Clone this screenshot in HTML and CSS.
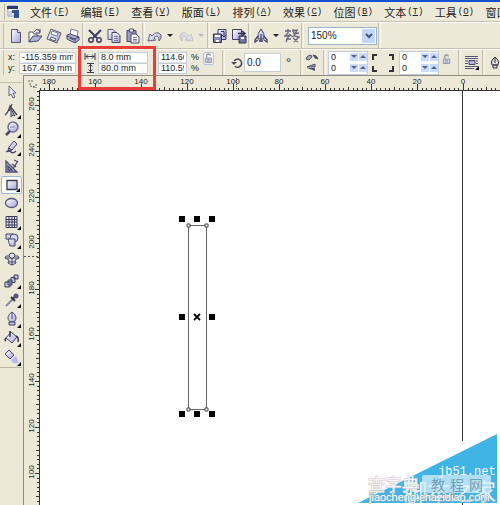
FILE: index.html
```html
<!DOCTYPE html>
<html lang="zh-CN">
<head>
<meta charset="utf-8">
<title>CorelDRAW</title>
<link rel="stylesheet" href="styles.css">
</head>
<body>
<svg class="defs" aria-hidden="true">
  <defs>
    <linearGradient id="lav" x1="0" y1="0" x2="1" y2="1"><stop offset="0" stop-color="#fff"/><stop offset="1" stop-color="#a3a3d8"/></linearGradient>
    <symbol id="lock" viewBox="0 0 10 12"><path d="M3 5V3q0-2 2-2t2 2" fill="none" stroke="#8f93ad" stroke-width="1.4"/><path d="M1.5 5.5h7v5h-7z" fill="#d5d8e8" stroke="#8f93ad"/><path d="M3 7h4M3 9h4" stroke="#8f93ad"/></symbol>
    <symbol id="pages" viewBox="0 0 16 16"><path d="M2 1.500h5l3 3v7H2z" fill="url(#lav)" stroke="#555574"/><path d="M6 4.500h5l3 3v7H6z" fill="url(#lav)" stroke="#45456a"/><path d="M8 8.500h4M8 10.500h4M8 12.500h4" stroke="#777799"/></symbol>
    <symbol id="arc" viewBox="0 0 16 16"><path d="M1 13 3 6l2 2q5-6 9-1 1 3-2 6 0-5-2-5-2 0-3 2l2 2z" fill="url(#lav)" stroke="currentColor"/></symbol>
  </defs>
</svg>
<div class="app">
  <div class="titlebar"></div>
  <nav class="menubar">
    <svg class="appicon" viewBox="0 0 14 14"><path d="M1 1h9v10H1z" fill="#fff" stroke="#8d9cc8"/><path d="M0 1h11v3H0z" fill="#243b78"/><path d="M5 5h7v8H7V8H5z" fill="#33518e"/><path d="M2 6h3v5H2z" fill="#c2cef0"/></svg>
    <div class="menus">
      <button>文件<span>(<u>F</u>)</span></button>
      <button>编辑<span>(<u>E</u>)</span></button>
      <button>查看<span>(<u>V</u>)</span></button>
      <button>版面<span>(<u>L</u>)</span></button>
      <button>排列<span>(<u>A</u>)</span></button>
      <button>效果<span>(<u>C</u>)</span></button>
      <button>位图<span>(<u>B</u>)</span></button>
      <button>文本<span>(<u>T</u>)</span></button>
      <button>工具<span>(<u>O</u>)</span></button>
      <button>窗口</button>
    </div>
  </nav>

  <div class="toolbar">
    <button class="tb" aria-label="新建"><svg viewBox="0 0 16 16"><path d="M3.500 1.500h6l3 3v10h-9z" fill="url(#lav)" stroke="#55556f"/><path d="M9.500 1.500v3h3" fill="#fff" stroke="#55556f"/></svg></button>
    <button class="tb" aria-label="打开"><svg viewBox="0 0 16 16"><path d="M2 14V4h4l1 2h3v3" fill="#fff" stroke="#55556f"/><path d="m2 14 4-6h9l-4 5z" fill="#b4b4dc" stroke="#45456a"/><path d="M7 4q2-4 5-2l1 2M13 1v4H9" fill="none" stroke="#45456a"/></svg></button>
    <button class="tb" aria-label="保存"><svg viewBox="0 0 16 16"><path d="m5 1 10 4-4 10-10-4z" fill="url(#lav)" stroke="#55556f"/><path d="m6 3 6 2-1 3-6-2z" fill="#fff" stroke="#777799"/><path d="m5 9 5 2-1 2-5-2z" fill="#fff" stroke="#55556f"/></svg></button>
    <button class="tb" aria-label="打印"><svg viewBox="0 0 16 16"><path d="m5 7 1-6 7 2-1 6" fill="#fff" stroke="#777799"/><path d="m2 7 3-1 9 3v3l-4 3-8-4z" fill="#b1b1dc" stroke="#45456a"/><path d="m2 8 8 3 4-2M10 11v3M5 10l4 2" fill="none" stroke="#45456a"/></svg></button>
    <i class="sep"></i>
    <button class="tb" aria-label="剪切"><svg viewBox="0 0 16 16"><path d="m2 2 8 8M14 2l-8 8" stroke="#3c3c5c" stroke-width="2"/><circle cx="4" cy="12" r="2.200" fill="none" stroke="#3c3c5c" stroke-width="1.500"/><circle cx="12" cy="12" r="2.200" fill="none" stroke="#3c3c5c" stroke-width="1.500"/></svg></button>
    <button class="tb" aria-label="复制"><svg><use href="#pages"/></svg></button>
    <button class="tb" aria-label="粘贴"><svg viewBox="0 0 16 16"><path d="M2 2.500h9v11H2z" fill="#9d9dcc" stroke="#45456a"/><path d="M4.500 1h4v3h-4z" fill="#fff" stroke="#45456a"/><path d="M6 6h5l3 3v6H6z" fill="#fff" stroke="#45456a"/><path d="M8 9.500h4M8 11.500h4M8 13h4" stroke="#777799"/></svg></button>
    <i class="sep"></i>
    <button class="tb undo" aria-label="撤消"><svg><use href="#arc"/></svg></button>
    <button class="caret" aria-label="撤消列表"></button>
    <button class="tb redo" aria-label="重做"><svg><use href="#arc"/></svg></button>
    <button class="caret dim" aria-label="重做列表"></button>
    <i class="sep"></i>
    <button class="tb" aria-label="导入"><svg viewBox="0 0 16 16"><path d="M6 1.500h8v10H6z" fill="url(#lav)" stroke="#3f3f66"/><path d="M1.500 6h8v8.500h-8z" fill="#8888bd" stroke="#303052"/><path d="M3 7h5v2H3zM4 12h3v2H4z" fill="#fff"/><path d="M9 3.500h3v5M10 7l2 2 2-2" fill="none" stroke="#303052"/></svg></button>
    <button class="tb" aria-label="导出"><svg viewBox="0 0 16 16"><path d="M1.500 1.500h9v10h-9z" fill="url(#lav)" stroke="#3f3f66"/><path d="M8 8h7v7H8z" fill="#7474a8" stroke="#303052"/><path d="M10 9h3v2h-3z" fill="#fff"/><path d="M7 5.500h6M11 3l3 2.500L11 8" fill="none" stroke="#303052" stroke-width="1.500"/></svg></button>
    <i class="sep"></i>
    <button class="tb" aria-label="应用程序启动器"><svg viewBox="0 0 16 16"><path d="M8 1q4 4 3 10H5Q4 5 8 1z" fill="url(#lav)" stroke="#45456a"/><path d="m5 8-3 4v2l3-2M11 8l3 4v2l-3-2M8 6v8M6 13h4" fill="none" stroke="#45456a" stroke-width="1.300"/></svg></button>
    <button class="caret" aria-label="启动器列表"></button>
    <button class="tb" aria-label="社区"><svg viewBox="0 0 16 16"><path d="M1 3h6M4 1v4l-3 3h5M5 7l-3 7M2 11h5M8 3l6-1M9 1l1 5 5-1M13 2l-3 6 5 1-5 5M9 10l5 4M5 6l4 3" fill="none" stroke="#66667f" stroke-width="1.300"/></svg></button>
    <i class="sep"></i>
    <label class="zoom"><input type="text" value="150%" aria-label="缩放级别"><button aria-label="缩放列表"><svg viewBox="0 0 10 8"><path d="m2 2 3 3 3-3" fill="none" stroke="#3c5684" stroke-width="2"/></svg></button></label>
    <i class="sep"></i>
  </div>

  <div class="props">
    <div class="pair pos">
      <label for="px">x:</label><input id="px" type="text" value="-115.359 mm">
      <label for="py">y:</label><input id="py" type="text" value="167.439 mm">
    </div>
    <div class="pair size">
      <label for="pw" aria-label="宽度"><svg viewBox="0 0 12 10"><path d="M1 1v7M11 1v7M2 4.500h8M4 2.500l-2 2 2 2M8 2.500l2 2-2 2" fill="none" stroke="#3c3c50"/></svg></label><input id="pw" type="text" value="8.0 mm">
      <label for="ph" aria-label="高度"><svg viewBox="0 0 12 10"><path d="M3 .500h7M3 9.500h7M6.500 1v8M4.500 3.500l2-2 2 2M4.500 6.500l2 2 2-2" fill="none" stroke="#3c3c50"/></svg></label><input id="ph" type="text" value="80.0 mm">
    </div>
    <div class="pair scale">
      <input id="sx" type="text" value="114.66"><label for="sx">%</label>
      <input id="sy" type="text" value="110.59"><label for="sy">%</label>
    </div>
    <button class="lock boxed" aria-label="锁定比率"><svg><use href="#lock"/></svg></button>
    <i class="sep"></i>
    <label class="rotate"><svg viewBox="0 0 12 12"><path d="M3 4q4-4 7 0 2 4-2 6-3 1-4-1" fill="none" stroke="#4a4a5c" stroke-width="1.500"/><path d="M0 5h6L3 8z" fill="#4a4a5c"/></svg><input type="text" value="0.0" aria-label="旋转角度"><span>°</span></label>
    <i class="sep"></i>
    <div class="mirror">
      <button aria-label="水平镜像"><svg viewBox="0 0 14 9"><path d="M1 6q1-4 5-4l1 2-3 3z" fill="#aaaabd" stroke="#55556a"/><path d="M8 2q4 0 5 4l-3-1z" fill="#55556a" stroke="#55556a"/></svg></button>
      <button aria-label="垂直镜像"><svg viewBox="0 0 14 9"><path d="m2 4 8-3v3z" fill="#8f8fa8" stroke="#55556a"/><path d="m2 5 8 3V5z" fill="#55556a"/></svg></button>
    </div>
    <i class="sep"></i>
    <div class="corners">
      <div class="spin"><input type="text" value="0" aria-label="左上角"><button class="dn" aria-label="减"></button><button class="up" aria-label="加"></button></div>
      <div class="spin"><input type="text" value="0" aria-label="左下角"><button class="dn" aria-label="减"></button><button class="up" aria-label="加"></button></div>
    </div>
    <svg class="brackets" viewBox="0 0 24 18"><path d="M2 6V1h4M18 1h4v5M2 12v5h4M18 17h4v-5" fill="none" stroke="#333" stroke-width="2"/></svg>
    <div class="corners">
      <div class="spin"><input type="text" value="0" aria-label="右上角"><button class="dn" aria-label="减"></button><button class="up" aria-label="加"></button></div>
      <div class="spin"><input type="text" value="0" aria-label="右下角"><button class="dn" aria-label="减"></button><button class="up" aria-label="加"></button></div>
    </div>
    <button class="lock" aria-label="全部圆角"><svg><use href="#lock"/></svg></button>
    <i class="sep"></i>
    <button class="wrap" aria-label="文本换行"><svg viewBox="0 0 16 16"><path d="M1 1.500h13M1 3.500h13M1 11.500h13M1 13.500h9M1 6h3M1 8.500h3M12 6h2M12 8.500h2" stroke="#55556f"/><path d="M5 5.500h6v4H5z" fill="#b4b4e0" stroke="#45456a"/><path d="M15 11v4h-4z"/></svg></button>
    <i class="sep"></i>
    <button class="pen" aria-label="轮廓宽度"><svg viewBox="0 0 12 14"><path d="M6 1q5 4 3 8H3Q1 5 6 1zM4 9h4v3H4z" fill="#ddd" stroke="#333344"/><path d="M6 2v5" stroke="#333344"/></svg></button>
  </div>

  <div class="work">
    <aside class="toolbox">
      <div class="tools first">
        <button aria-label="挑选"><svg viewBox="0 0 16 16"><path d="M5 2v10l2-2 2 4 2-1-2-4h3z" fill="#e3e3f5" stroke="#66667c"/></svg></button>
        <button class="fly" aria-label="形状"><svg viewBox="0 0 16 16"><path d="M1 12q3-2 5-9l7 9M8 1 5 8" fill="none" stroke="#45455c" stroke-width="1.300"/><path d="M7 6v8l2-2 2 1z" fill="#a9a9d4" stroke="#45455c"/></svg></button>
        <button class="fly" aria-label="缩放"><svg viewBox="0 0 16 16"><path d="m6 10-4 4" stroke="#45456a" stroke-width="2.500"/><circle cx="9" cy="6" r="5" fill="url(#lav)" stroke="#6d6d94" stroke-width="1.500"/><path d="M6 6h5" stroke="#8484b4"/></svg></button>
        <button class="fly" aria-label="手绘"><svg viewBox="0 0 16 16"><path d="M10 1 5 7l-1 4 4-1 5-6z" fill="url(#lav)" stroke="#45456a"/><path d="m4 11-2 1q3-2 5 0t5-1M4 8l4 2" fill="none" stroke="#45456a" stroke-width="1.300"/></svg></button>
        <button aria-label="智能绘图"><svg viewBox="0 0 16 16"><path d="M2 3v11h11z" fill="#b1b1d6" stroke="#4c4c6c" stroke-width="1.300"/><path d="M4 8v4h4zM14 3l-4 6-2 1M10 2l4 2M8 6l4 3" fill="none" stroke="#4c4c6c" stroke-width="1.300"/></svg></button>
        <button class="fly active" aria-label="矩形"><svg viewBox="0 0 16 16"><path d="M3 3.500h10v9H3z" fill="url(#lav)" stroke="#3a3a55" stroke-width="1.300"/></svg></button>
        <button class="fly" aria-label="椭圆"><svg viewBox="0 0 16 16"><ellipse cx="7.500" cy="8" rx="6" ry="4.500" fill="url(#lav)" stroke="#55557c" stroke-width="1.300"/></svg></button>
        <button class="fly" aria-label="图纸"><svg viewBox="0 0 16 16"><path d="M2 2.500h11v11H2zM2 5.500h11M2 8h11M2 11h11M5 2v11M8 2v11M10.500 2v11" fill="#e1e1f4" stroke="#3c3c5c"/></svg></button>
        <button class="fly" aria-label="基本形状"><svg viewBox="0 0 16 16"><path d="M2 2h7v5H2z" fill="#d1d1ef" stroke="#45456a"/><circle cx="10" cy="6" r="4" fill="#d6d6f1" stroke="#45456a"/><path d="M4 7h7v7H6z" fill="url(#lav)" stroke="#45456a"/></svg></button>
        <button aria-label="智能填充"><svg viewBox="0 0 16 16"><path d="M8 2q3 0 3 3 4-1 4 2l-4 2 1 3-4 2-4-2 1-3-4-2q0-3 4-2 0-3 3-3zM5 5l3 3 3-3M8 8v6M2 7h12M5 11h6" fill="#ddddef" stroke="#48485f"/></svg></button>
      </div>
      <div class="tools second">
        <button class="fly" aria-label="交互式调和"><svg viewBox="0 0 16 16"><path d="M1 9h5v5H1zM4 7h4v5H4zM7 4.500h4v5H7zM10 2h4v4h-4z" fill="#c2c2e8" stroke="#3c3c5c"/></svg></button>
        <button class="fly" aria-label="滴管"><svg viewBox="0 0 16 16"><path d="m2 14 7-7" stroke="#8888a4" stroke-width="2"/><path d="m7 5 4 4M9 7l3-4" stroke="#33334c" stroke-width="2"/><circle cx="12" cy="4" r="2.500" fill="#55557c"/></svg></button>
        <button class="fly" aria-label="轮廓"><svg viewBox="0 0 16 16"><path d="M8 1q7 5 2 10H6Q1 6 8 1z" fill="url(#lav)" stroke="#45456a"/><path d="M8 2v6M5 11h6v3H5z" fill="#bcbce0" stroke="#45456a"/></svg></button>
        <button class="fly" aria-label="填充"><svg viewBox="0 0 16 16"><path d="m7 2 6 5-5 6-6-5z" fill="url(#lav)" stroke="#45456a"/><path d="M6 1v6M2 8q-2 2 0 3M12 6q3 1 2 6" fill="none" stroke="#33334c" stroke-width="1.500"/></svg></button>
        <button class="fly" aria-label="交互式填充"><svg viewBox="0 0 16 16"><path d="m5 1 5 5-4 4-5-5z" fill="url(#lav)" stroke="#45456a"/><path d="m7 11 5-4 3 7H9z" fill="#b8b8ee"/></svg></button>
      </div>
    </aside>

    <main class="view">
      <div class="origin"><svg viewBox="0 0 15 14"><path d="M4 5h3M5 8h3M8 4v3M9 11h3M12 8v4M6 10l5 1" fill="none" stroke="#66665f" stroke-dasharray="2 1"/></svg></div>
      <svg class="ruler-h">
        <defs><pattern id="th" x="10" y="0" width="46" height="14" patternUnits="userSpaceOnUse"><path d="M0 8h1v6H0zM5 12h1v2H5zM9 12h1v2H9zM14 12h1v2h-1zM18 12h1v2h-1zM23 11h1v3h-1zM28 12h1v2h-1zM32 12h1v2h-1zM37 12h1v2h-1zM41 12h1v2h-1z" fill="#333"/></pattern></defs>
        <rect width="100%" height="14" fill="url(#th)"/>
        <path d="M197.500 2v12" stroke="#555" stroke-dasharray="1 1"/>
        <g text-anchor="middle"><text x="10" y="8">180</text><text x="56" y="8">160</text><text x="102" y="8">140</text><text x="148" y="8">120</text><text x="194" y="8">100</text><text x="240" y="8">80</text><text x="286" y="8">60</text><text x="332" y="8">40</text><text x="378" y="8">20</text><text x="424" y="8">0</text></g>
      </svg>
      <svg class="ruler-v">
        <defs><pattern id="tv" x="0" y="15" width="15" height="46" patternUnits="userSpaceOnUse"><path d="M11 0h4v1h-4zM13 5h2v1h-2zM13 9h2v1h-2zM13 14h2v1h-2zM13 18h2v1h-2zM12 23h3v1h-3zM13 28h2v1h-2zM13 32h2v1h-2zM13 37h2v1h-2zM13 41h2v1h-2z" fill="#333"/></pattern></defs>
        <rect width="15" height="100%" fill="url(#tv)"/>
        <path d="M0 166.500h15" stroke="#555" stroke-dasharray="2 2"/>
        <g text-anchor="middle"><text transform="translate(10 14) rotate(-90)">260</text><text transform="translate(10 60) rotate(-90)">240</text><text transform="translate(10 106) rotate(-90)">220</text><text transform="translate(10 152) rotate(-90)">200</text><text transform="translate(10 198) rotate(-90)">180</text><text transform="translate(10 244) rotate(-90)">160</text><text transform="translate(10 290) rotate(-90)">140</text><text transform="translate(10 336) rotate(-90)">120</text><text transform="translate(10 382) rotate(-90)">100</text></g>
      </svg>
      <div class="canvas">
        <svg class="drawing">
          <path d="M422.500 0v350" stroke="#333"/>
          <path d="M148.500 134.500h18v184h-18z" fill="none" stroke="#666"/>
          <path d="M147 133h3v3h-3zM165 133h3v3h-3zM147 317h3v3h-3zM165 317h3v3h-3z" fill="#fff" stroke="#444"/>
          <path d="M139 125h6v6h-6zM154 125h6v6h-6zM169 125h6v6h-6zM139 223h6v6h-6zM169 223h6v6h-6zM139 320h6v6h-6zM154 320h6v6h-6zM169 320h6v6h-6z"/>
          <path d="m154 223 6 6m0-6-6 6" stroke="#000" stroke-width="1.800"/>
        </svg>
        <svg class="watermark" viewBox="0 0 150 75">
          <path d="M8 73 147 4v69z" fill="#41b4e6"/>
          <path d="M112.500 73v2" stroke="#333"/>
          <text class="site" x="88" y="45">jb51.net</text>
          <text class="big" x="54" y="70">脚本之家</text>
          <text class="dict" x="18" y="61">查字典</text>
          <rect x="72" y="45" width="69" height="18" rx="2" fill="#d5edf8" fill-opacity=".75"/>
          <g class="course"><text x="81" y="60">教</text><text x="100" y="60">程</text><text x="119" y="60">网</text></g>
          <text class="url" x="19" y="71">jiaocheng.chazidian.com</text>
        </svg>
      </div>
    </main>
  </div>
  <div class="highlight"></div>
</div>
</body>
</html>
```
FILE: styles.css
```css
* { box-sizing: border-box; }
body { margin: 0; background: #ece9d8; color: #222; font-family: "Liberation Sans", "Noto Sans CJK SC", sans-serif; font-size: 9px; }
button { display: flex; align-items: center; justify-content: center; margin: 0; padding: 0; border: 0; background: none; color: inherit; font: inherit; }
input { min-width: 0; margin: 0; padding: 0 2px; border: 1px solid #c5ced6; background: #fff; color: #222; font: inherit; }
svg { display: block; }
.defs { position: absolute; width: 0; height: 0; }
.app { position: relative; display: flex; flex-direction: column; height: 100vh; overflow: hidden; }
.titlebar { flex: none; height: 2px; background: #1450d2; }

.menubar { flex: none; display: flex; align-items: center; height: 20px; padding-left: 4px; border-bottom: 1px solid #c4c0ae; }
.menubar::before { content: ""; width: 1px; height: 16px; background: #bbb7a5; }
.appicon { flex: none; width: 14px; height: 14px; margin: 0 9px 0 2px; }
.menus { flex: 1; display: grid; grid-template-columns: repeat(10, 1fr); margin-right: -36px; font-size: 11px; font-family: "Noto Sans CJK SC", sans-serif; }
.menus button { justify-content: flex-start; white-space: nowrap; line-height: 16px; }
.menus span { padding-left: 1px; font: 9px "Liberation Mono", monospace; }

.toolbar, .props { flex: none; display: flex; align-items: center; padding-left: 6px; box-shadow: inset 3px 0 #ece9d8, inset 4px 0 #c4c0ae; overflow: hidden; }
.toolbar { height: 27px; border-top: 1px solid #fff; border-bottom: 1px solid #c4c0ae; }
.sep { flex: none; align-self: stretch; width: 3px; border-left: 1px solid #c4c0ae; border-right: 1px solid #f7f5ec; }
.tb { flex: none; width: 19px; height: 20px; }
.tb svg { width: 16px; height: 16px; }
.undo { color: #62627c; }
.redo { color: #aaaabc; }
.redo svg { transform: scaleX(-1); opacity: .6; }
.caret { flex: none; width: 12px; height: 20px; }
.caret::before { content: ""; border: 3px solid transparent; border-top-color: #222; border-bottom: 0; }
.caret.dim::before { border-top-color: #bbb; }
.zoom { flex: none; display: flex; width: 69px; height: 18px; margin: 0 1px 0 4px; border: 1px solid #9bb2cf; background: #fff; font-size: 10px; }
.zoom input { flex: 1; border: 0; }
.zoom button { width: 13px; margin: 1px; background: #c3d5f8; }
.zoom svg { width: 10px; height: 8px; }

.props { height: 26px; padding-left: 8px; border-top: 1px solid #fff; }
.pair { flex: none; display: grid; grid-template-rows: 11px 11px; align-items: stretch; line-height: 11px; }
.pair input { line-height: 9px; height: 11px; }
.pair input:first-of-type { border-bottom-color: #dfe3e6; }
.pair svg { width: 12px; height: 10px; }
.pos { grid-template-columns: 11px 57px; margin-right: 8px; }
.size { grid-template-columns: 14px 50px; margin-right: 10px; }
.scale { grid-template-columns: 29px 16px; }
.scale label { padding-left: 4px; }
.lock { flex: none; align-self: flex-start; width: 11px; height: 13px; margin-top: 2px; }
.lock svg { width: 9px; height: 11px; }
.boxed { margin-right: 8px; border: 1px solid #b4c4dc; border-radius: 2px; background: #f5f6f8; }
.rotate { flex: none; display: flex; align-items: center; gap: 1px; margin: 0 10px 0 6px; font-size: 10px; }
.rotate svg { width: 12px; height: 12px; }
.rotate input { width: 37px; height: 19px; }
.rotate span { width: 8px; padding-left: 4px; font-size: 13px; }
.mirror { flex: none; display: grid; gap: 1px; margin: 0 4px 0 2px; }
.mirror svg { width: 14px; height: 9px; }
.corners { flex: none; display: grid; grid-template: 11px 11px / minmax(0, 1fr); width: 40px; margin-left: 2px; border: 1px solid #c5ced6; background: #fff; }
.spin { display: flex; gap: 1px; }
.spin input { flex: 1; width: 0; height: 10px; border: 0; line-height: 10px; }
.spin button { flex: none; width: 8px; height: 8px; margin-top: 1px; background: #c9dafa; }
.spin button::before { content: ""; border: 3px solid transparent; }
.spin .dn::before { border-top-color: #4c6590; border-bottom: 0; }
.spin .up::before { border-bottom-color: #4c6590; border-top: 0; }
.brackets { flex: none; width: 24px; height: 18px; margin: 0 2px 0 3px; }
.corners + .lock { margin: 3px 6px 0 2px; }
.wrap { flex: none; margin: 0 2px 0 3px; }
.wrap svg { width: 16px; height: 16px; }
.pen { flex: none; margin-left: 4px; }
.pen svg { width: 12px; height: 14px; }

.work { flex: 1; display: grid; grid-template-columns: 23px 1fr; min-height: 0; }
.toolbox { padding-top: 7px; padding-right: 1px; }
.tools { display: grid; grid-auto-rows: 1fr; border-top: 1px solid #c4c0ae; }
.first { height: 186px; }
.second { height: 100px; padding-top: 3px; border-top: 0; border-bottom: 1px solid #bbb7a5; }
.tools button { position: relative; width: 21px; margin-left: 1px; }
.tools svg { width: 16px; height: 16px; }
.tools .active { border: 1px solid #9bb6d6; border-radius: 2px; background: #fff; }
.fly::after { content: ""; position: absolute; right: 1px; bottom: 1px; border: 2px solid #000; border-top-color: transparent; border-left-color: transparent; }
.view { display: grid; grid-template: 14px 1fr / 15px 1fr; min-height: 0; border-top: 1px solid #8d8b82; border-left: 1px solid #8d8b82; }
.view text { fill: #222; font: 8px "Liberation Sans", sans-serif; }
.origin svg { width: 15px; height: 14px; }
.ruler-h { width: 100%; height: 14px; }
.ruler-v { width: 15px; height: 100%; }
.canvas { position: relative; border-top: 1px solid #333; border-left: 1px solid #333; background: #fff; overflow: hidden; }
.drawing { position: absolute; inset: 0; width: 100%; height: 100%; }
.watermark { position: absolute; right: 0; bottom: 0; width: 150px; height: 75px; }
.watermark .site { fill: #fff; font: 12px "Liberation Mono", monospace; }
.watermark .big { fill: #fff; font: 23px "Noto Sans CJK SC", sans-serif; }
.watermark .dict { fill: #fff; fill-opacity: .85; stroke: #d3c6cb; stroke-width: 1px; paint-order: stroke; font: 17px "Noto Sans CJK SC", sans-serif; }
.watermark .course text { fill: #6c9fba; font: 14px "Noto Sans CJK SC", sans-serif; }
.watermark .url { fill: #fff; stroke: #8aa9b8; stroke-width: 1px; paint-order: stroke; font: 11px "Liberation Sans", sans-serif; }
.highlight { position: absolute; left: 78px; top: 46px; width: 78px; height: 44px; border: 3px solid #ea3d3a; }
```
